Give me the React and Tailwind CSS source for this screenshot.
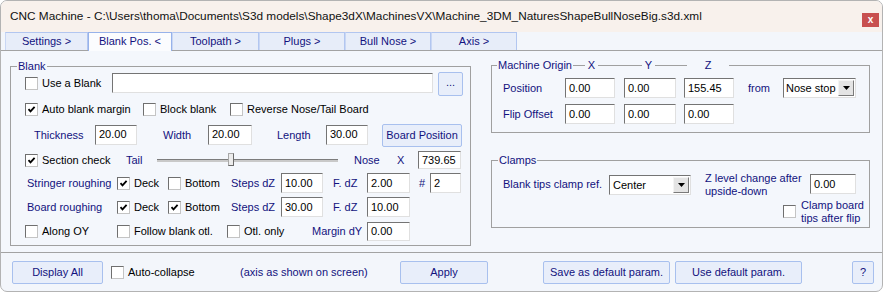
import React from 'react';

const navy = 'text-[#12127e]';

function Box({ checked }) {
    return (
        <span className="w-[13px] h-[13px] shrink-0 bg-white border border-t-[#6f6f6f] border-l-[#6f6f6f] border-b-[#c4c4c4] border-r-[#c4c4c4] flex items-center justify-center">
            {checked && (
                <svg width="9" height="9" viewBox="0 0 9 9">
                    <polyline points="1.5,4.2 3.5,6.4 7.6,1.8" fill="none" stroke="#000" strokeWidth="1.8" />
                </svg>
            )}
        </span>
    );
}

function Check({ checked, children, className = '' }) {
    return (
        <div className={`flex items-center shrink-0 ${className}`}>
            <Box checked={checked} />
            <span className="ml-[4px] text-black whitespace-nowrap">{children}</span>
        </div>
    );
}

function Field({ value, className = '' }) {
    return (
        <div className={`shrink-0 whitespace-nowrap bg-white border border-t-[#747474] border-l-[#747474] border-b-[#e0e0e0] border-r-[#e0e0e0] flex items-center pl-[3px] text-black ${className}`}>
            {value}
        </div>
    );
}

function Select({ value, className = '' }) {
    return (
        <div className={`shrink-0 h-[20px] bg-white border border-t-[#747474] border-l-[#747474] border-b-[#e0e0e0] border-r-[#e0e0e0] flex items-center justify-between pl-[2px] pr-[1px] text-black ${className}`}>
            <span className="whitespace-nowrap">{value}</span>
            <span className="w-[16px] h-[16px] shrink-0 bg-[#e4e4e4] border border-t-[#f4f4f4] border-l-[#f4f4f4] border-b-[#7a7a7a] border-r-[#7a7a7a] flex items-center justify-center">
                <svg width="7" height="4" viewBox="0 0 7 4"><polygon points="0,0 7,0 3.5,4" fill="#000" /></svg>
            </span>
        </div>
    );
}

function Button({ children, className = '' }) {
    return (
        <div className={`shrink-0 whitespace-nowrap h-[23px] bg-[#e8eefa] border border-[#a8c0ee] rounded-[2px] flex items-center justify-center ${navy} ${className}`}>
            {children}
        </div>
    );
}

function Cell({ children, className = '' }) {
    return <div className={`shrink-0 whitespace-nowrap ${navy} ${className}`}>{children}</div>;
}

const tabs = [
    { label: 'Settings >', w: 'w-[83px]' },
    { label: 'Blank Pos. <', w: 'w-[84px]', active: true },
    { label: 'Toolpath >', w: 'w-[87px]' },
    { label: 'Plugs >', w: 'w-[86px]' },
    { label: 'Bull Nose >', w: 'w-[86px]' },
    { label: 'Axis >', w: 'w-[86px]' },
];

export default function App() {
    return (
        <div className="w-[883px] h-[292px] overflow-hidden border border-[#b3b3b3] rounded-[7px] bg-[#f3f6fb] font-['Liberation_Sans',Arial,sans-serif] text-[11px] flex flex-col">
            {/* title bar */}
            <div className="h-[31px] shrink-0 bg-[#f8f1ec] flex items-center pl-[9px] pr-[3px]">
                <span className="flex-1 text-[11.8px] text-[#111] whitespace-nowrap">
                    CNC Machine - C:\Users\thoma\Documents\S3d models\Shape3dX\MachinesVX\Machine_3DM_NaturesShapeBullNoseBig.s3d.xml
                </span>
                <div className="self-start mt-[12px] w-[17px] h-[14px] bg-[#c8504f] text-white text-[10px] font-bold flex items-center justify-center leading-none pb-[1px]">
                    x
                </div>
            </div>

            {/* tabs */}
            <div className="h-[18px] shrink-0 flex items-end pl-[4px] relative z-10">
                {tabs.map((t) =>
                    t.active ? (
                        <div key={t.label} className={`${t.w} h-[19px] -mb-[1px] bg-[#fbfcfe] border border-b-0 border-[#97b2ea] flex items-center justify-center pb-[1px] ${navy}`}>
                            {t.label}
                        </div>
                    ) : (
                        <div key={t.label} className={`${t.w} h-[18px] bg-[#e7edf9] border border-b-0 border-[#b2c6f0] border-l-[#c9d7f4] flex items-center justify-center ${navy}`}>
                            {t.label}
                        </div>
                    )
                )}
            </div>

            {/* tab page */}
            <div className="h-[203px] shrink-0 border-t border-b border-[#a3a3a3] bg-[#f4f7fc] flex">
                {/* Blank group */}
                <div className="relative ml-[9px] mt-[15px] w-[461px] h-[180px] border border-[#a0a0a0] shrink-0 flex flex-col pt-[3px]">
                    <span className={`absolute -top-[8px] left-[6px] px-[1px] bg-[#f4f7fc] leading-[14px] ${navy}`}>Blank</span>

                    <div className="h-[27px] flex items-center pl-[14px]">
                        <Check className="w-[87px]">Use a Blank</Check>
                        <Field value="" className="w-[321px] h-[20px] -mt-[1px]" />
                        <Button className="ml-[5px] w-[25px] h-[24px] pb-[3px]">...</Button>
                    </div>

                    <div className="h-[24px] flex items-center pl-[14px]">
                        <Check checked className="w-[118px]">Auto blank margin</Check>
                        <Check className="w-[87px]">Block blank</Check>
                        <Check>Reverse Nose/Tail Board</Check>
                    </div>

                    <div className="h-[28px] flex items-center pl-[23px]">
                        <Cell className="w-[61px]">Thickness</Cell>
                        <Field value="20.00" className="w-[42px] h-[20px] -mt-[1px]" />
                        <Cell className="ml-[26px] w-[45px]">Width</Cell>
                        <Field value="20.00" className="w-[44px] h-[20px] -mt-[1px]" />
                        <Cell className="ml-[25px] w-[49px]">Length</Cell>
                        <Field value="30.00" className="w-[42px] h-[20px] -mt-[1px]" />
                        <Button className="ml-[14px] w-[80px]">Board Position</Button>
                    </div>

                    <div className="h-[22px] flex items-center pl-[14px]">
                        <Check checked className="w-[101px]">Section check</Check>
                        <Cell className="w-[31px]">Tail</Cell>
                        <div className="relative w-[181px] h-[14px] flex items-center shrink-0">
                            <div className="w-full h-[3px] bg-[#c9c9c9] border-t border-[#7c7c7c]" />
                            <div className="absolute left-[71px] top-[0px] w-[6px] h-[13px] bg-[#ececec] border border-[#a8a8a8] border-b-[#6a6a6a] border-r-[#6a6a6a]" />
                        </div>
                        <Cell className="ml-[16px] w-[43px]">Nose</Cell>
                        <Cell className="w-[21px]">X</Cell>
                        <Field value="739.65" className="w-[43px] h-[18px]" />
                    </div>

                    <div className="h-[24px] flex items-center pl-[16px]">
                        <Cell className="w-[90px]">Stringer roughing</Cell>
                        <Check checked className="w-[51px]">Deck</Check>
                        <Check className="w-[63px]">Bottom</Check>
                        <Cell className="w-[50px]">Steps dZ</Cell>
                        <Field value="10.00" className="w-[42px] h-[20px]" />
                        <Cell className="ml-[10px] w-[34px]">F. dZ</Cell>
                        <Field value="2.00" className="w-[43px] h-[20px]" />
                        <Cell className="ml-[9px] w-[11px]">#</Cell>
                        <Field value="2" className="w-[31px] h-[20px]" />
                    </div>

                    <div className="h-[24px] flex items-center pl-[16px]">
                        <Cell className="w-[90px]">Board roughing</Cell>
                        <Check checked className="w-[51px]">Deck</Check>
                        <Check checked className="w-[63px]">Bottom</Check>
                        <Cell className="w-[50px]">Steps dZ</Cell>
                        <Field value="30.00" className="w-[42px] h-[20px]" />
                        <Cell className="ml-[10px] w-[34px]">F. dZ</Cell>
                        <Field value="10.00" className="w-[43px] h-[20px]" />
                    </div>

                    <div className="h-[24px] flex items-center pl-[14px]">
                        <Check className="w-[92px]">Along OY</Check>
                        <Check className="w-[110px]">Follow blank otl.</Check>
                        <Check className="w-[85px]">Otl. only</Check>
                        <Cell className="w-[55px]">Margin dY</Cell>
                        <Field value="0.00" className="w-[43px] h-[19px]" />
                    </div>
                </div>

                {/* right column */}
                <div className="ml-[20px] w-[379px] shrink-0 flex flex-col">
                    {/* Machine Origin */}
                    <div className="relative mt-[14px] h-[68px] border border-[#a0a0a0] flex flex-col pl-[11px]">
                        <span className={`absolute -top-[8px] left-[5px] px-[1px] bg-[#f4f7fc] leading-[14px] ${navy}`}>Machine Origin</span>
                        <span className={`absolute -top-[8px] left-[93px] w-[13px] text-center bg-[#f4f7fc] leading-[14px] ${navy}`}>X</span>
                        <span className={`absolute -top-[8px] left-[150px] w-[13px] text-center bg-[#f4f7fc] leading-[14px] ${navy}`}>Y</span>
                        <span className={`absolute -top-[8px] left-[195px] w-[42px] text-center bg-[#f4f7fc] leading-[14px] ${navy}`}>Z</span>

                        <div className="mt-[12px] h-[20px] flex items-center">
                            <Cell className="w-[62px]">Position</Cell>
                            <Field value="0.00" className="w-[50px] h-[20px]" />
                            <Field value="0.00" className="ml-[9px] w-[52px] h-[20px]" />
                            <Field value="155.45" className="ml-[8px] w-[50px] h-[20px]" />
                            <Cell className="ml-[14px] w-[35px]">from</Cell>
                            <Select value="Nose stop" className="w-[73px]" />
                        </div>
                        <div className="mt-[6px] h-[20px] flex items-center">
                            <Cell className="w-[62px]">Flip Offset</Cell>
                            <Field value="0.00" className="w-[50px] h-[20px]" />
                            <Field value="0.00" className="ml-[9px] w-[52px] h-[20px]" />
                            <Field value="0.00" className="ml-[8px] w-[50px] h-[20px]" />
                        </div>
                    </div>

                    {/* Clamps */}
                    <div className="relative mt-[27px] h-[68px] border border-[#a0a0a0] flex items-start pl-[11px] pt-[13px]">
                        <span className={`absolute -top-[8px] left-[6px] px-[1px] bg-[#f4f7fc] leading-[14px] ${navy}`}>Clamps</span>
                        <Cell className="w-[106px] h-[21px] flex items-center">Blank tips clamp ref.</Cell>
                        <Select value="Center" className="mt-[1px] w-[82px] pl-[3px]" />
                        <div className="ml-[14px] flex flex-col">
                            <div className="h-[24px] flex items-start">
                                <Cell className="w-[105px] -mt-[2px] leading-[13px]">
                                    Z level change after
                                    <br />
                                    upside-down
                                </Cell>
                                <Field value="0.00" className="w-[46px] h-[20px]" />
                            </div>
                            <div className="mt-[1px] ml-[78px] flex items-start">
                                <div className="mt-[6px]">
                                    <Box />
                                </div>
                                <span className={`ml-[5px] leading-[13px] ${navy}`}>
                                    Clamp board
                                    <br />
                                    tips after flip
                                </span>
                            </div>
                        </div>
                    </div>
                </div>
            </div>

            {/* bottom bar */}
            <div className="flex-1 flex items-center pl-[11px]">
                <Button className="w-[91px]">Display All</Button>
                <Check className="ml-[8px] w-[129px]">Auto-collapse</Check>
                <Cell className="w-[160px]">(axis as shown on screen)</Cell>
                <Button className="w-[88px]">Apply</Button>
                <Button className="ml-[55px] w-[127px]">Save as default param.</Button>
                <Button className="ml-[5px] w-[127px]">Use default param.</Button>
                <Button className="ml-[50px] w-[22px]">?</Button>
            </div>
        </div>
    );
}
